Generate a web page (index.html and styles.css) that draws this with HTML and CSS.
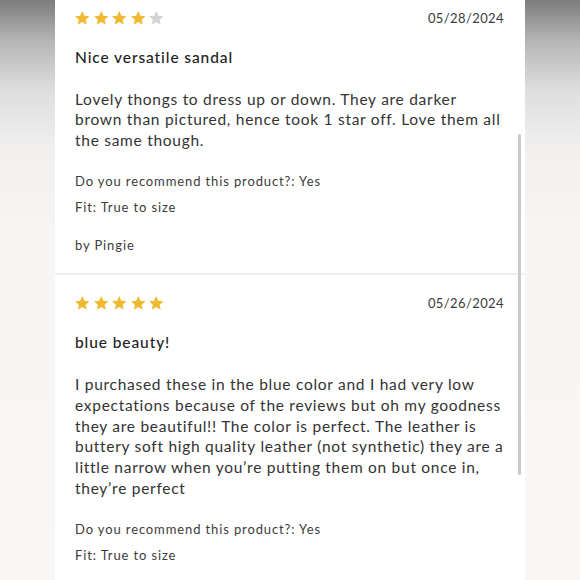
FILE: index.html
```html
<!DOCTYPE html>
<html>
<head>
<meta charset="utf-8">
<link rel="stylesheet" href="styles.css">
</head>
<body>
<div class="frame">
  <div class="side"></div>
  <div class="card">
    <div class="list">
      <div class="review">
        <div class="head">
          <div class="stars">
            <svg class="star on" viewBox="0 0 24 24"><path d="M12 1.5l3.1 6.9 7.4.7-5.6 5 1.7 7.4L12 17.6l-6.6 3.9 1.7-7.4-5.6-5 7.4-.7z"/></svg>
            <svg class="star on" viewBox="0 0 24 24"><path d="M12 1.5l3.1 6.9 7.4.7-5.6 5 1.7 7.4L12 17.6l-6.6 3.9 1.7-7.4-5.6-5 7.4-.7z"/></svg>
            <svg class="star on" viewBox="0 0 24 24"><path d="M12 1.5l3.1 6.9 7.4.7-5.6 5 1.7 7.4L12 17.6l-6.6 3.9 1.7-7.4-5.6-5 7.4-.7z"/></svg>
            <svg class="star on" viewBox="0 0 24 24"><path d="M12 1.5l3.1 6.9 7.4.7-5.6 5 1.7 7.4L12 17.6l-6.6 3.9 1.7-7.4-5.6-5 7.4-.7z"/></svg>
            <svg class="star off" viewBox="0 0 24 24"><path d="M12 1.5l3.1 6.9 7.4.7-5.6 5 1.7 7.4L12 17.6l-6.6 3.9 1.7-7.4-5.6-5 7.4-.7z"/></svg>
          </div>
          <div class="date">05/28/2024</div>
        </div>
        <div class="title">Nice versatile sandal</div>
        <p class="body">Lovely thongs to dress up or down. They are darker brown than pictured, hence took 1 star off. Love them all the same though.</p>
        <div class="meta">Do you recommend this product?: Yes</div>
        <div class="meta fit">Fit: True to size</div>
        <div class="meta author">by Pingie</div>
      </div>
      <div class="review">
        <div class="head">
          <div class="stars">
            <svg class="star on" viewBox="0 0 24 24"><path d="M12 1.5l3.1 6.9 7.4.7-5.6 5 1.7 7.4L12 17.6l-6.6 3.9 1.7-7.4-5.6-5 7.4-.7z"/></svg>
            <svg class="star on" viewBox="0 0 24 24"><path d="M12 1.5l3.1 6.9 7.4.7-5.6 5 1.7 7.4L12 17.6l-6.6 3.9 1.7-7.4-5.6-5 7.4-.7z"/></svg>
            <svg class="star on" viewBox="0 0 24 24"><path d="M12 1.5l3.1 6.9 7.4.7-5.6 5 1.7 7.4L12 17.6l-6.6 3.9 1.7-7.4-5.6-5 7.4-.7z"/></svg>
            <svg class="star on" viewBox="0 0 24 24"><path d="M12 1.5l3.1 6.9 7.4.7-5.6 5 1.7 7.4L12 17.6l-6.6 3.9 1.7-7.4-5.6-5 7.4-.7z"/></svg>
            <svg class="star on" viewBox="0 0 24 24"><path d="M12 1.5l3.1 6.9 7.4.7-5.6 5 1.7 7.4L12 17.6l-6.6 3.9 1.7-7.4-5.6-5 7.4-.7z"/></svg>
          </div>
          <div class="date">05/26/2024</div>
        </div>
        <div class="title">blue beauty!</div>
        <p class="body">I purchased these in the blue color and I had very low expectations because of the reviews but oh my goodness they are beautiful!! The color is perfect. The leather is buttery soft high quality leather (not synthetic) they are a little narrow when you’re putting them on but once in, they’re perfect</p>
        <div class="meta">Do you recommend this product?: Yes</div>
        <div class="meta fit">Fit: True to size</div>
      </div>
    </div>
    <div class="scrollbar"></div>
  </div>
  <div class="side"></div>
</div>
</body>
</html>
```

FILE: styles.css
```css
html, body {
  margin: 0;
  padding: 0;
  background: #fff;
}
.frame {
  display: flex;
  width: 580px;
  height: 580px;
  overflow: hidden;
  font-family: Lato, "Noto Sans", sans-serif;
  color: #333;
}
.side {
  width: 55px;
  flex: none;
  background: linear-gradient(to bottom, #7c7c7c 0px, #b4b4b4 40px, #dedede 90px, #f1f0ef 150px, #f6f5f3 230px, #f8f7f5 580px);
}
.card {
  position: relative;
  width: 470px;
  flex: none;
  background: #fff;
  overflow: hidden;
}
.list {
  margin-top: -10px;
}
.review {
  padding: 18px 21px 19px 20px;
  border-bottom: 2px solid #efefef;
}
.head {
  display: flex;
  justify-content: space-between;
  align-items: center;
  height: 20px;
}
.stars {
  display: flex;
  gap: 2px;
  margin-left: -1px;
  padding-top: 1px;
}
.star {
  width: 16.5px;
  height: 16.5px;
  display: block;
}
.star.on { fill: #efb931; }
.star.off { fill: #d2d2d2; }
.date {
  font-size: 13px;
  letter-spacing: 0.4px;
  color: #3a3a3a;
  line-height: 18px;
}
.title {
  margin-top: 18px;
  font-size: 15.5px;
  line-height: 22px;
  font-weight: 500;
  letter-spacing: 0.9px;
  color: #222;
}
.body {
  margin: 20.5px 0 0;
  font-size: 15.5px;
  line-height: 20.9px;
  letter-spacing: 0.72px;
  color: #333;
}
.meta {
  margin-top: 20.5px;
  font-size: 13px;
  line-height: 18px;
  letter-spacing: 0.88px;
  color: #3c3c3c;
}
.meta.fit { margin-top: 8.5px; }
.meta.author { margin-top: 20px; }
.scrollbar {
  position: absolute;
  left: 463px;
  top: 134px;
  width: 3px;
  height: 341px;
  border-radius: 2px;
  background: #c9c9c9;
}
```
